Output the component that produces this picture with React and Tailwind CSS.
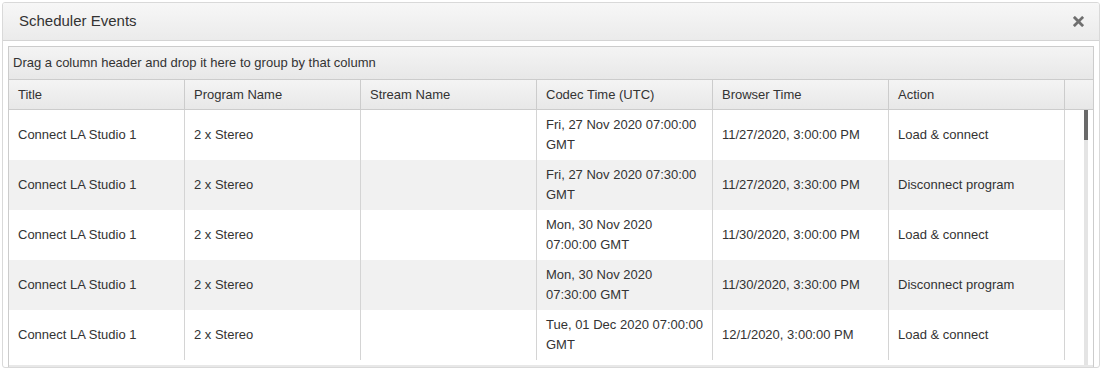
import React from 'react';

const columns = ['Title', 'Program Name', 'Stream Name', 'Codec Time (UTC)', 'Browser Time', 'Action'];

const events = [
  { title: 'Connect LA Studio 1', program: '2 x Stereo', stream: '', codec: 'Fri, 27 Nov 2020 07:00:00 GMT', browser: '11/27/2020, 3:00:00 PM', action: 'Load & connect' },
  { title: 'Connect LA Studio 1', program: '2 x Stereo', stream: '', codec: 'Fri, 27 Nov 2020 07:30:00 GMT', browser: '11/27/2020, 3:30:00 PM', action: 'Disconnect program' },
  { title: 'Connect LA Studio 1', program: '2 x Stereo', stream: '', codec: 'Mon, 30 Nov 2020 07:00:00 GMT', browser: '11/30/2020, 3:00:00 PM', action: 'Load & connect' },
  { title: 'Connect LA Studio 1', program: '2 x Stereo', stream: '', codec: 'Mon, 30 Nov 2020 07:30:00 GMT', browser: '11/30/2020, 3:30:00 PM', action: 'Disconnect program' },
  { title: 'Connect LA Studio 1', program: '2 x Stereo', stream: '', codec: 'Tue, 01 Dec 2020 07:00:00 GMT', browser: '12/1/2020, 3:00:00 PM', action: 'Load & connect' },
];

const App = () => {
  return (
    <div className="h-[371px] w-[1103px] overflow-hidden bg-white pl-[2px] pt-[2px] text-[#333]" style={{ fontFamily: '"Liberation Sans", Arial, sans-serif' }}>
      {/* Dialog panel */}
      <div className="flex h-[366px] w-[1098px] flex-col overflow-hidden rounded-[3px] border border-[#d9d9d9] bg-white">
        {/* Header */}
        <div className="flex h-[38px] shrink-0 items-center justify-between border-b border-[#d4d4d4] bg-gradient-to-b from-[#f7f7f7] to-[#ebebeb] pl-[16px] pr-[14px]">
          <span className="text-[15px] text-[#333]">Scheduler Events</span>
          <svg width="11" height="11" viewBox="0 0 12 12" className="mr-[1px]">
            <path d="M2 2 L10 10 M10 2 L2 10" stroke="#6f6f6f" strokeWidth="3" strokeLinecap="square" />
          </svg>
        </div>

        {/* Body */}
        <div className="flex-1 overflow-hidden px-[5px] pt-[5px]">
          <div className="flex h-full w-[1086px] flex-col border-x border-t border-[#cccccc] text-[13px]">
            {/* Group bar */}
            <div className="flex h-[33px] shrink-0 items-center border-b border-[#cccccc] bg-gradient-to-b from-[#f4f4f4] to-[#e8e8e8] pl-[4px]">
              Drag a column header and drop it here to group by that column
            </div>

            {/* Column headers */}
            <div className="flex h-[30px] shrink-0 border-b border-[#cccccc] bg-gradient-to-b from-[#f4f4f4] to-[#e8e8e8]">
              {columns.map((c) => (
                <div key={c} className="flex w-[176px] items-center border-r border-[#cccccc] pl-[9px]">
                  {c}
                </div>
              ))}
              <div className="flex-1" />
            </div>

            {/* Rows + scrollbar */}
            <div className="flex flex-1 overflow-hidden border-b-2 border-[#e8e8e8]">
              <div className="flex flex-col">
                {events.map((e, i) => (
                  <div key={i} className={`flex h-[50px] shrink-0 ${i % 2 === 1 ? 'bg-[#f1f1f1]' : 'bg-white'}`}>
                    {[e.title, e.program, e.stream, e.codec, e.browser, e.action].map((v, j) => (
                      <div key={j} className="flex w-[176px] items-center border-r border-[#d4d4d4] pl-[9px] pr-[7px] leading-[20px]">
                        {v}
                      </div>
                    ))}
                  </div>
                ))}
              </div>
              <div className="flex flex-1 justify-end pr-[5px]">
                <div className="flex w-[4px] flex-col bg-[#e4e4e4]">
                  <div className="h-[30px] w-[4px] bg-[#6a6a6a]" />
                </div>
              </div>
            </div>
          </div>
        </div>
      </div>
    </div>
  );
};

export default App;
